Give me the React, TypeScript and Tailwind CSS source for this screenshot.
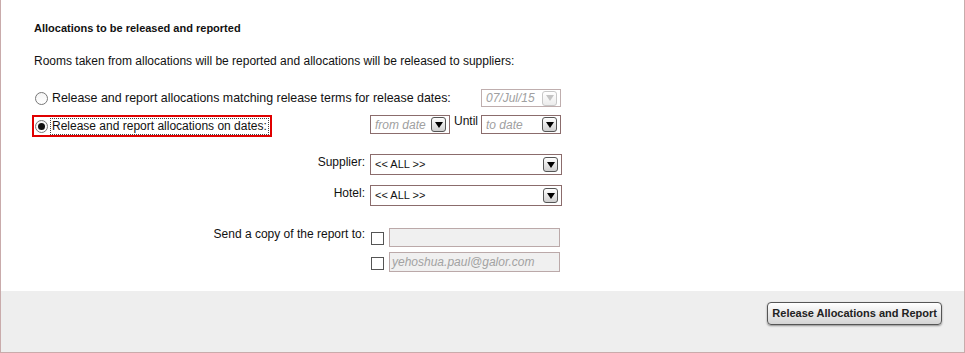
const font = { fontFamily: '"Liberation Sans", Arial, sans-serif' };

function Arrow({ disabled }: { disabled?: boolean }) {
  return (
    <span
      className={
        "flex h-[15px] w-[15px] items-center justify-center rounded-[3px] border " +
        (disabled
          ? "border-[#c8c8c8] bg-gradient-to-b from-white to-[#ececec]"
          : "border-[#555] bg-gradient-to-b from-white to-[#cfcfcf]")
      }
    >
      <span
        className={
          "h-0 w-0 border-x-[4px] border-t-[6px] border-x-transparent " +
          (disabled ? "border-t-[#c4c4c4]" : "border-t-black")
        }
      />
    </span>
  );
}

function Select({
  value,
  width,
  height,
  disabled,
  placeholder,
}: {
  value: string;
  width: string;
  height: string;
  disabled?: boolean;
  placeholder?: boolean;
}) {
  return (
    <div
      className={
        "flex items-center justify-between bg-white pl-[4px] pr-[3px] text-[11px] " +
        width +
        " " +
        height +
        " " +
        (disabled ? "border border-[#bfaeae]" : "border border-[#8b6c6c]")
      }
    >
      <span
        className={
          placeholder || disabled ? "italic text-[#a0a0a0] text-[12px]" : "text-[#111]"
        }
      >
        {value}
      </span>
      <Arrow disabled={disabled} />
    </div>
  );
}

function Radio({ checked }: { checked?: boolean }) {
  return (
    <span className="flex h-[13px] w-[13px] shrink-0 items-center justify-center rounded-full border border-[#777] bg-gradient-to-b from-[#f4f4f4] to-white">
      {checked && <span className="h-[7px] w-[7px] rounded-full bg-[#111]" />}
    </span>
  );
}

function Check() {
  return <span className="block h-[13px] w-[13px] border border-[#555] bg-white" />;
}

export default function App() {
  return (
    <div
      className="flex h-[353px] w-[965px] flex-col border-x border-b border-[#c9abab] bg-white text-[12px] text-[#111]"
      style={font}
    >
      <div className="flex-1 pl-[33px]">
        <div className="mt-[21px] h-[14px] text-[11px] font-bold leading-[14px]">
          Allocations to be released and reported
        </div>
        <div className="mt-[19px] h-[14px] leading-[14px]">
          Rooms taken from allocations will be reported and allocations will be released to suppliers:
        </div>

        <div className="mt-[21px] flex h-[18px] items-center">
          <div className="flex w-[447px] items-center gap-[4px] pl-[1px] text-[12.4px] whitespace-nowrap">
            <Radio />
            <span>Release and report allocations matching release terms for release dates:</span>
          </div>
          <Select value="07/Jul/15" width="w-[80px]" height="h-[18px]" disabled />
        </div>

        <div className="mt-[8px] flex items-start">
          <div className="w-[336px]">
            <div className="-ml-[2px] inline-flex h-[22px] items-center gap-[2px] border-2 border-[#e00000] pl-[1px] pr-[1px] text-[12px] whitespace-nowrap">
              <Radio checked />
              <span className="border border-dotted border-[#444] px-[1px] leading-[15px]">
                Release and report allocations on dates:
              </span>
            </div>
          </div>
          <div className="flex items-start">
            <Select value="from date" width="w-[80px]" height="h-[19px]" placeholder />
            <span className="ml-[4px] mr-[3px] leading-[12px]">Until</span>
            <Select value="to date" width="w-[80px]" height="h-[19px]" placeholder />
          </div>
        </div>

        <div className="mt-[17px] flex items-start">
          <span className="w-[331px] pt-[1px] text-right leading-[14px]">Supplier:</span>
          <div className="ml-[5px]">
            <Select value="<< ALL >>" width="w-[192px]" height="h-[21px]" />
          </div>
        </div>
        <div className="mt-[10px] flex items-start">
          <span className="w-[331px] pt-[1px] text-right leading-[14px]">Hotel:</span>
          <div className="ml-[5px]">
            <Select value="<< ALL >>" width="w-[192px]" height="h-[21px]" />
          </div>
        </div>

        <div className="mt-[22px] flex items-start">
          <span className="w-[331px] text-right leading-[12px]">Send a copy of the report to:</span>
          <div className="ml-[6px] mt-[4px]">
            <Check />
          </div>
          <div className="ml-[5px] h-[19px] w-[171px] border border-[#bba9a9] bg-[#f0f0f0]" />
        </div>
        <div className="mt-[5px] flex items-start">
          <span className="w-[331px]" />
          <div className="ml-[6px] mt-[5px]">
            <Check />
          </div>
          <div className="ml-[5px] flex h-[20px] w-[171px] items-center border border-[#bba9a9] bg-[#f0f0f0] pl-[2px] text-[12px] italic text-[#a2a2a2]">
            yehoshua.paul@galor.com
          </div>
        </div>
      </div>

      <div className="flex h-[61px] items-start justify-end bg-[#eeeeee] pr-[22px] pt-[11px]">
        <button
          className="h-[23px] rounded-[4px] border border-[#555] bg-gradient-to-b from-white to-[#d4d4d4] px-[4px] text-[11px] font-bold text-[#222] shadow-[0_1px_2px_rgba(0,0,0,0.4)]"
          style={font}
        >
          Release Allocations and Report
        </button>
      </div>
    </div>
  );
}
